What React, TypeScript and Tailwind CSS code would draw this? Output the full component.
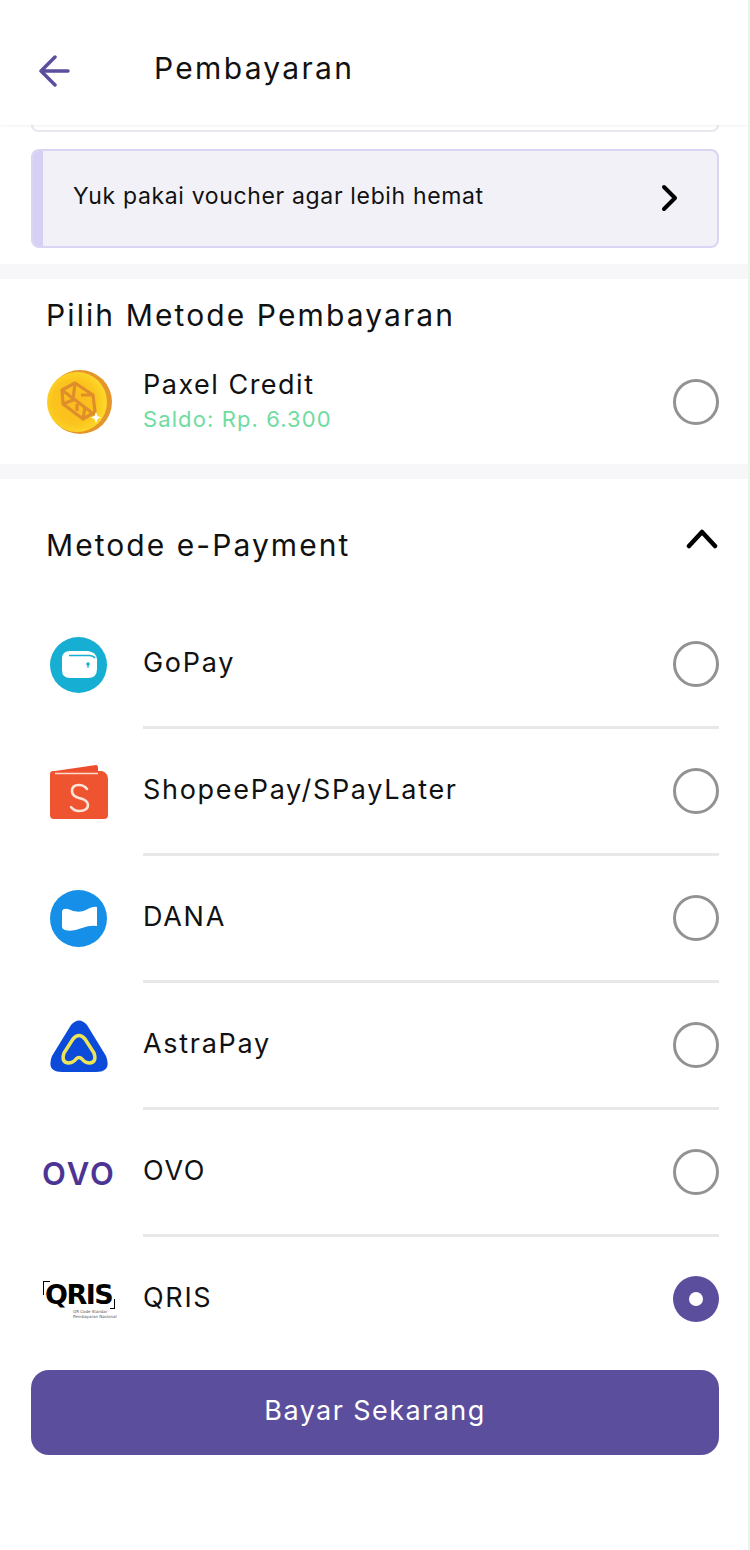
const font = "font-['Inter',sans-serif]"

function Radio({ checked = false }: { checked?: boolean }) {
  if (checked) {
    return (
      <div className="w-[46px] h-[46px] rounded-full bg-[#5b4f9d] flex items-center justify-center shrink-0">
        <div className="w-[14px] h-[14px] rounded-full bg-white"></div>
      </div>
    )
  }
  return <div className="w-[46px] h-[46px] rounded-full border-[3px] border-[#929292] shrink-0"></div>
}

function CoinIcon() {
  return (
    <svg width="65" height="64" viewBox="0 0 65 64">
      <defs>
        <radialGradient id="coin" cx="45%" cy="50%" r="55%">
          <stop offset="0%" stopColor="#fbbb1e" />
          <stop offset="65%" stopColor="#fbc41d" />
          <stop offset="100%" stopColor="#fdd92a" />
        </radialGradient>
      </defs>
      <circle cx="33" cy="32" r="32" fill="#e5962b" />
      <circle cx="30" cy="32" r="30" fill="url(#coin)" />
      <g fill="none" stroke="#e08d2b" strokeWidth="3.200" strokeLinejoin="round">
        <path d="M15 20 L28 13 L46 25 L48 42 L36 49 L16 34 Z" />
        <path d="M15 20 L48 45 M28 13 L26 30 L16 34 M34 25 H46 M30 34 L30 41 M36 49 L38 37" />
      </g>
      <path d="M49 42 L50.500 46 L54 47.500 L50.500 49 L49 53 L47.500 49 L44 47.500 L47.500 46 Z" fill="#fff" />
    </svg>
  )
}

function GoPayIcon() {
  return (
    <svg width="58" height="56" viewBox="0 0 58 56">
      <ellipse cx="28.500" cy="28" rx="28.500" ry="28" fill="#17aed3" />
      <path d="M20 14 H38 Q46 15 47 22 V32 Q47 41 38 41 H20 Q12 41 12 33 V22 Q12 14 20 14 Z" fill="#fff" />
      <path d="M19 18.500 H39 Q43 18.500 45 21" fill="none" stroke="#17aed3" strokeWidth="1.500" />
      <circle cx="38" cy="27" r="1.800" fill="#17aed3" />
      <path d="M38 27 V31" stroke="#17aed3" strokeWidth="1.200" />
    </svg>
  )
}

function ShopeeIcon() {
  return (
    <svg width="58" height="54" viewBox="0 0 58 54">
      <path d="M5 6 L46 0 Q48 0 48 3 V6 Z" fill="#ee4d2d" />
      <path d="M0 9 Q0 6 3 6 H52 Q58 8 58 14 V50 Q58 54 54 54 H4 Q0 54 0 50 Z" fill="#ee5430" />
      <path d="M5 8.500 H48" stroke="#fbd9cd" strokeWidth="1.500" />
      <path d="M37 24 Q34 20 29 20 Q22 20 22 26 Q22 31 29 33 Q38 35 38 40 Q38 46 29 46 Q24 46 21 42" fill="none" stroke="#fde3d8" strokeWidth="2.600" strokeLinecap="round" />
    </svg>
  )
}

function DanaIcon() {
  return (
    <svg width="58" height="58" viewBox="0 0 58 58">
      <ellipse cx="28.500" cy="28.500" rx="28.500" ry="28.500" fill="#158fe8" />
      <path d="M12 21 Q13 18 18 19 Q28 24 36 20 Q43 16 47 17 V36 Q40 35 32 38 Q22 42 15 40 Q12 39 12 37 Z" fill="#fff" />
    </svg>
  )
}

function AstraIcon() {
  return (
    <svg width="58" height="54" viewBox="0 0 58 54">
      <path d="M21 6 Q29 -3 37 6 L56 37 Q62 53 46 53 H12 Q-4 53 2 37 Z" fill="#0c4ad9" />
      <path d="M23 20 Q29 13 35 20 L44 34 Q47 43 40 44 Q35 44 32 40 Q29 37 26 40 Q23 44 18 44 Q11 43 14 34 Z" fill="none" stroke="#ece55a" strokeWidth="3.500" strokeLinejoin="round" />
    </svg>
  )
}

function OvoLogo() {
  return (
    <div className="w-[72px] h-[30px] flex items-center justify-center font-['Inter',sans-serif] font-semibold text-[#4c3494] text-[31px] leading-none tracking-[2px]">
      <span className="inline-block">OVO</span>
    </div>
  )
}

function QrisLogo() {
  return (
    <div className="relative w-[72px] h-[38px] font-['DejaVu_Sans',sans-serif] text-black">
      <div className="absolute left-0 top-0 w-[7px] h-[14px] border-l border-t border-black"></div>
      <div className="absolute right-0 top-[18px] w-[5px] h-[10px] border-r border-b border-black"></div>
      <div className="absolute left-[2px] top-[1px] text-[27px] leading-[26px] font-bold tracking-[-1.500px]">QRIS</div>
      <div className="absolute left-[30px] top-[28px] text-[4px] leading-[5px] text-[#555555] whitespace-nowrap">
        <div>QR Code Standar</div>
        <div>Pembayaran Nasional</div>
      </div>
    </div>
  )
}

const methods = [
  { name: 'GoPay', icon: <GoPayIcon /> },
  { name: 'ShopeePay/SPayLater', icon: <ShopeeIcon /> },
  { name: 'DANA', icon: <DanaIcon /> },
  { name: 'AstraPay', icon: <AstraIcon /> },
  { name: 'OVO', icon: <OvoLogo /> },
  { name: 'QRIS', icon: <QrisLogo />, checked: true },
]

export default function App() {
  return (
    <div className={`w-[750px] h-[1550px] bg-white text-[#111111] border-r-2 border-[#e9f8e6] overflow-hidden ${font}`}>
      {/* Header */}
      <div className="relative z-10 h-[125px] bg-white shadow-[0_1px_3px_rgba(0,0,0,0.06)] flex items-center pl-[38px] pt-[10px]">
        <svg width="34" height="32" viewBox="0 0 34 32" className="mt-[6px]">
          <path d="M17 2 L3 16 L17 30 M3 16 H30" fill="none" stroke="#5b4f9d" strokeWidth="3.500" strokeLinecap="round" strokeLinejoin="round" />
        </svg>
        <div className="ml-[82px] text-[30px] leading-[36px] tracking-[2.300px]">Pembayaran</div>
      </div>

      {/* Card hidden behind the header */}
      <div className="ml-[31px] mr-[29px] h-[7px] bg-white border-x-2 border-b-2 border-[#e8e8ee] rounded-b-lg"></div>

      {/* Voucher */}
      <div className="ml-[31px] mr-[29px] mt-[17px] h-[99px] flex items-center bg-[#f2f1f8] border-2 border-[#d9d5f3] rounded-lg overflow-hidden">
        <div className="w-[10px] h-full bg-[#d5d0f4] shrink-0"></div>
        <div className="ml-[30px] mb-[6px] flex-1 text-[23px] leading-[28px] tracking-[0.650px]">Yuk pakai voucher agar lebih hemat</div>
        <svg width="18" height="28" viewBox="0 0 18 28" className="mr-[38px] mb-[2px]">
          <path d="M3 3 L14 14 L3 25" fill="none" stroke="#000" strokeWidth="4" strokeLinecap="round" strokeLinejoin="round" />
        </svg>
      </div>

      <div className="h-[15px] mt-[16px] bg-[#f7f7f9]"></div>

      {/* Paxel Credit */}
      <div className="h-[185px] pl-[31px] pr-[29px]">
        <div className="pt-[18px] pl-[15px] text-[30px] leading-[36px] tracking-[2.100px]">Pilih Metode Pembayaran</div>
        <div className="mt-[36px] flex items-center">
          <div className="w-[65px] ml-[16px] shrink-0"><CoinIcon /></div>
          <div className="ml-[31px] flex-1 mb-[2px]">
            <div className="text-[27px] leading-[32px] tracking-[1.500px]">Paxel Credit</div>
            <div className="mt-[4px] text-[22px] leading-[28px] tracking-[1.100px] text-[#6fdc9f]">Saldo: Rp. 6.300</div>
          </div>
          <Radio />
        </div>
      </div>

      <div className="h-[15px] bg-[#f7f7f9]"></div>

      {/* e-Payment */}
      <div className="pl-[31px] pr-[29px]">
        <div className="h-[123px] flex items-center justify-between pl-[15px]">
          <div className="text-[30px] leading-[36px] tracking-[2.060px] mt-[9px]">Metode e-Payment</div>
          <svg width="34" height="22" viewBox="0 0 34 22" className="mb-[5px]">
            <path d="M4 19 L17 5 L30 19" fill="none" stroke="#000" strokeWidth="4.500" strokeLinecap="round" strokeLinejoin="round" />
          </svg>
        </div>
        {methods.map((m, i) => (
          <div key={m.name} className="flex items-stretch h-[127px]">
            <div className="w-[112px] shrink-0 flex items-center justify-center pr-[16px] pb-[1px]">{m.icon}</div>
            <div className={`flex-1 flex items-center border-b-[3px] ${i < methods.length - 1 ? 'border-[#e8e8ea]' : 'border-transparent'}`}>
              <div className="flex-1 text-[27px] leading-[32px] tracking-[1.700px] mb-[3px]">{m.name}</div>
              <Radio checked={m.checked} />
            </div>
          </div>
        ))}
        <div className="mt-[6px] h-[85px] rounded-[18px] bg-[#5b4f9d] flex items-center justify-center text-white text-[27px] tracking-[1.430px] pb-[2px]">
          Bayar Sekarang
        </div>
      </div>
    </div>
  )
}
